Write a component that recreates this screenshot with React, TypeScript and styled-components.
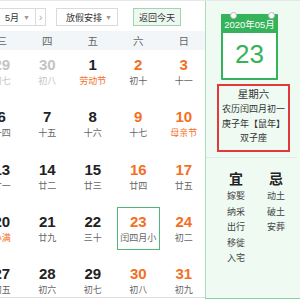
import React from "react";
import styled, { createGlobalStyle } from "styled-components";

const GlobalStyle = createGlobalStyle`
  html, body {
    margin: 0;
    padding: 0;
    background: #fff;
    overflow: hidden;
  }
  body {
    font-family: "Liberation Sans", "Noto Sans CJK SC", sans-serif;
  }
`;

const ORANGE = "#f4701f";
const GREEN = "#35b35a";

const Widget = styled.div`
  display: flex;
  width: 420px;
  margin-left: -112px;
  border-top: 1px solid #e6e6e6;
`;

const LeftPanel = styled.div`
  width: 317px;
  height: 296px;
  overflow: hidden;
  border-bottom: 1px solid #dedede;
`;

const Toolbar = styled.div`
  display: flex;
  align-items: flex-start;
  height: 30px;
  padding: 7px 0 0 27px;
  box-sizing: border-box;
`;

const Select = styled.div<{ $w: number; $gap?: number }>`
  display: flex;
  align-items: center;
  justify-content: space-between;
  width: ${(p) => p.$w}px;
  margin-left: ${(p) => p.$gap ?? 0}px;
  height: 18px;
  box-sizing: border-box;
  padding: 0 5px 0 9px;
  border: 1px solid #dadada;
  background: #fff;
  color: #333;
  font-size: 9px;
`;

const Caret = styled.span`
  color: #999;
  font-size: 7px;
`;

const ArrowBox = styled.div<{ $gap?: number }>`
  display: flex;
  align-items: center;
  justify-content: center;
  width: 11px;
  height: 18px;
  margin-left: ${(p) => p.$gap ?? 0}px;
  box-sizing: border-box;
  border: 1px solid #dadada;
  color: #aaa;
  font-size: 11px;
`;

const TodayButton = styled.div`
  display: flex;
  align-items: center;
  justify-content: center;
  width: 48px;
  height: 18px;
  margin-left: 15px;
  box-sizing: border-box;
  border: 1px solid #9fd6b2;
  background: #eef8f1;
  color: #333;
  font-size: 9px;
`;

const WeekHeader = styled.div`
  display: grid;
  grid-template-columns: repeat(7, 45.5px);
  height: 19px;
  background: #f3f6f9;
`;

const WeekLabel = styled.div`
  display: flex;
  align-items: center;
  justify-content: center;
  color: #666;
  font-size: 10.5px;
`;

const DayGrid = styled.div`
  display: grid;
  grid-template-columns: repeat(7, 45.5px);
  grid-auto-rows: 52.33px;
`;

const DayBox = styled.div<{ $today?: boolean }>`
  justify-self: center;
  width: 43px;
  height: 43px;
  box-sizing: border-box;
  border: 1px solid ${(p) => (p.$today ? "#4fb876" : "transparent")};
  display: flex;
  flex-direction: column;
  align-items: center;
  padding-top: 5px;
`;

const DayNum = styled.div<{ $color: string }>`
  font-size: 15px;
  line-height: 18px;
  font-weight: bold;
  color: ${(p) => p.$color};
`;

const Lunar = styled.div<{ $color: string }>`
  margin-top: 1px;
  font-size: 9px;
  line-height: 12px;
  color: ${(p) => p.$color};
  white-space: nowrap;
`;

const RightPanel = styled.div`
  width: 100px;
  height: 298px;
  box-sizing: border-box;
  background: #eefaf2;
  border-left: 1px solid #a9dcbb;
  border-bottom: 1px solid #86cf9f;
  display: flex;
  flex-direction: column;
  padding-top: 13px;
`;

const DateIcon = styled.div`
  position: relative;
  width: 57px;
  margin-left: 15px;
  background: ${GREEN};
  padding: 0 2px 2px;
  box-sizing: border-box;
  border-radius: 1px;
`;

const Ring = styled.span<{ $left: number }>`
  position: absolute;
  top: -2px;
  left: ${(p) => p.$left}px;
  width: 5px;
  height: 5px;
  border-radius: 50%;
  background: #fff;
  border: 1px solid #b9b9b9;
`;

const IconHead = styled.div`
  height: 19px;
  padding-top: 2px;
  box-sizing: border-box;
  text-align: center;
  color: #fff;
  font-size: 9.5px;
  line-height: 17px;
  white-space: nowrap;
`;

const IconBody = styled.div`
  height: 45px;
  background: #fff;
  text-align: center;
  color: ${GREEN};
  font-size: 26px;
  line-height: 43px;
`;

const InfoBox = styled.div`
  margin: 4px 0 0 11px;
  width: 73px;
  height: 68px;
  box-sizing: border-box;
  border: 2px solid #e2393b;
  display: flex;
  flex-direction: column;
  align-items: center;
  color: #333;
`;

const Weekday = styled.div`
  font-size: 10.5px;
  line-height: 16px;
`;

const InfoLine = styled.div`
  font-size: 9px;
  line-height: 14.5px;
  white-space: nowrap;
`;

const Divider = styled.div`
  height: 1px;
  margin: 5px 8px 0 0;
  background: #d9efe1;
`;

const Almanac = styled.div`
  display: grid;
  grid-template-columns: 40px 40px;
  margin: 12px 0 0 10px;
`;

const AlmanacCol = styled.div`
  display: flex;
  flex-direction: column;
  align-items: center;
`;

const AlmanacHead = styled.div`
  font-size: 14px;
  line-height: 18px;
  font-weight: bold;
  color: #222;
  margin-bottom: 1px;
`;

const AlmanacItem = styled.div`
  font-size: 9px;
  line-height: 15.5px;
  color: #444;
`;

type Day = {
  n: number;
  lunar: string;
  muted?: boolean;
  weekend?: boolean;
  fest?: boolean;
  today?: boolean;
};

const weeks: Day[][] = [
  [
    { n: 27, lunar: "初五", muted: true },
    { n: 28, lunar: "初六", muted: true },
    { n: 29, lunar: "初七", muted: true },
    { n: 30, lunar: "初八", muted: true },
    { n: 1, lunar: "劳动节", fest: true },
    { n: 2, lunar: "初十", weekend: true },
    { n: 3, lunar: "十一", weekend: true },
  ],
  [
    { n: 4, lunar: "青年节", fest: true },
    { n: 5, lunar: "立夏", fest: true },
    { n: 6, lunar: "十四" },
    { n: 7, lunar: "十五" },
    { n: 8, lunar: "十六" },
    { n: 9, lunar: "十七", weekend: true },
    { n: 10, lunar: "母亲节", weekend: true, fest: true },
  ],
  [
    { n: 11, lunar: "十九" },
    { n: 12, lunar: "二十" },
    { n: 13, lunar: "廿一" },
    { n: 14, lunar: "廿二" },
    { n: 15, lunar: "廿三" },
    { n: 16, lunar: "廿四", weekend: true },
    { n: 17, lunar: "廿五", weekend: true },
  ],
  [
    { n: 18, lunar: "廿六" },
    { n: 19, lunar: "廿七" },
    { n: 20, lunar: "小满", fest: true },
    { n: 21, lunar: "廿九" },
    { n: 22, lunar: "三十" },
    { n: 23, lunar: "闰四月小", weekend: true, today: true },
    { n: 24, lunar: "初二", weekend: true },
  ],
  [
    { n: 25, lunar: "初三" },
    { n: 26, lunar: "初四" },
    { n: 27, lunar: "初五" },
    { n: 28, lunar: "初六" },
    { n: 29, lunar: "初七" },
    { n: 30, lunar: "初八", weekend: true },
    { n: 31, lunar: "初九", weekend: true },
  ],
];

const weekNames = ["一", "二", "三", "四", "五", "六", "日"];
const good = ["嫁娶", "纳采", "出行", "移徙", "入宅"];
const bad = ["动土", "破土", "安葬"];

const numColor = (d: Day) => (d.muted ? "#c4c4c4" : d.weekend ? ORANGE : "#222");
const lunarColor = (d: Day) => (d.muted ? "#c4c4c4" : d.fest ? ORANGE : "#666");

export default function App() {
  return (
    <>
      <GlobalStyle />
      <Widget>
        <LeftPanel>
          <Toolbar>
            <Select $w={60}>
              2020年 <Caret>▼</Caret>
            </Select>
            <ArrowBox $gap={10}>‹</ArrowBox>
            <Select $w={41} $gap={-1}>
              5月 <Caret>▼</Caret>
            </Select>
            <ArrowBox $gap={-1}>›</ArrowBox>
            <Select $w={62} $gap={10}>
              放假安排 <Caret>▼</Caret>
            </Select>
            <TodayButton>返回今天</TodayButton>
          </Toolbar>
          <WeekHeader>
            {weekNames.map((w) => (
              <WeekLabel key={w}>{w}</WeekLabel>
            ))}
          </WeekHeader>
          <DayGrid>
            {weeks.flat().map((d, i) => (
              <DayBox key={i} $today={d.today}>
                <DayNum $color={numColor(d)}>{d.n}</DayNum>
                <Lunar $color={lunarColor(d)}>{d.lunar}</Lunar>
              </DayBox>
            ))}
          </DayGrid>
        </LeftPanel>
        <RightPanel>
          <DateIcon>
            <Ring $left={9} />
            <Ring $left={47} />
            <IconHead>2020年05月</IconHead>
            <IconBody>23</IconBody>
          </DateIcon>
          <InfoBox>
            <Weekday>星期六</Weekday>
            <InfoLine>农历闰四月初一</InfoLine>
            <InfoLine>庚子年【鼠年】</InfoLine>
            <InfoLine>双子座</InfoLine>
          </InfoBox>
          <Divider />
          <Almanac>
            <AlmanacCol>
              <AlmanacHead>宜</AlmanacHead>
              {good.map((g) => (
                <AlmanacItem key={g}>{g}</AlmanacItem>
              ))}
            </AlmanacCol>
            <AlmanacCol>
              <AlmanacHead>忌</AlmanacHead>
              {bad.map((g) => (
                <AlmanacItem key={g}>{g}</AlmanacItem>
              ))}
            </AlmanacCol>
          </Almanac>
        </RightPanel>
      </Widget>
    </>
  );
}
